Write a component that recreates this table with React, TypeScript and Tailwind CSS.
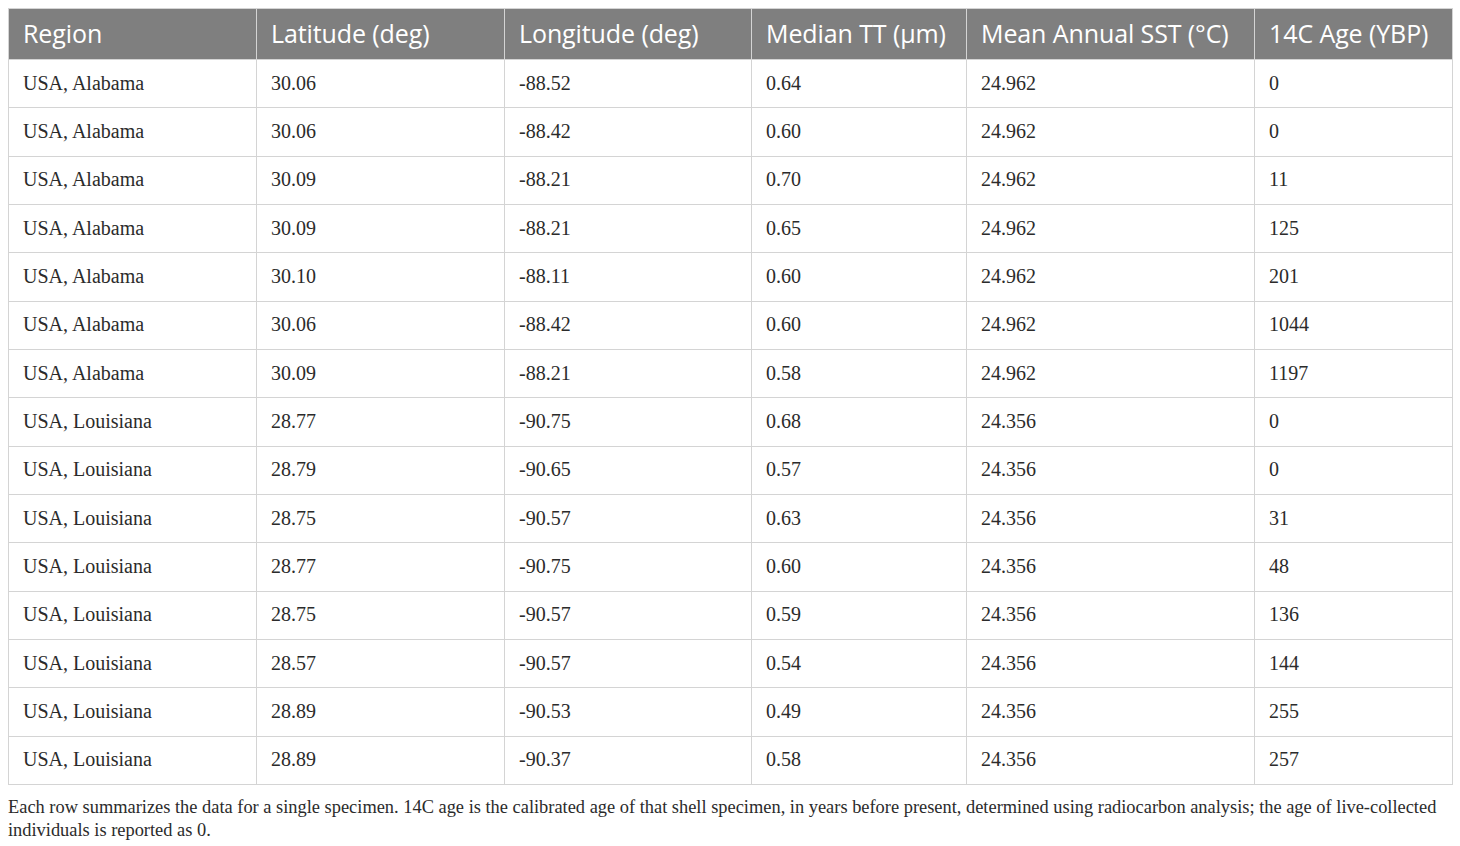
import React from "react";

const rows: string[][] = [
  ["USA, Alabama", "30.06", "-88.52", "0.64", "24.962", "0"],
  ["USA, Alabama", "30.06", "-88.42", "0.60", "24.962", "0"],
  ["USA, Alabama", "30.09", "-88.21", "0.70", "24.962", "11"],
  ["USA, Alabama", "30.09", "-88.21", "0.65", "24.962", "125"],
  ["USA, Alabama", "30.10", "-88.11", "0.60", "24.962", "201"],
  ["USA, Alabama", "30.06", "-88.42", "0.60", "24.962", "1044"],
  ["USA, Alabama", "30.09", "-88.21", "0.58", "24.962", "1197"],
  ["USA, Louisiana", "28.77", "-90.75", "0.68", "24.356", "0"],
  ["USA, Louisiana", "28.79", "-90.65", "0.57", "24.356", "0"],
  ["USA, Louisiana", "28.75", "-90.57", "0.63", "24.356", "31"],
  ["USA, Louisiana", "28.77", "-90.75", "0.60", "24.356", "48"],
  ["USA, Louisiana", "28.75", "-90.57", "0.59", "24.356", "136"],
  ["USA, Louisiana", "28.57", "-90.57", "0.54", "24.356", "144"],
  ["USA, Louisiana", "28.89", "-90.53", "0.49", "24.356", "255"],
  ["USA, Louisiana", "28.89", "-90.37", "0.58", "24.356", "257"],
];

const headers = [
  "Region",
  "Latitude (deg)",
  "Longitude (deg)",
  "Median TT (\u00b5m)",
  "Mean Annual SST (\u00b0C)",
  "14C Age (YBP)",
];

export default function App() {
  return (
    <div className="min-h-[846px] bg-white px-2 pt-2">
      <table className="w-[1444px] table-fixed border-collapse">
        <colgroup>
          <col className="w-[248px]" />
          <col className="w-[248px]" />
          <col className="w-[247px]" />
          <col className="w-[215px]" />
          <col className="w-[288px]" />
          <col className="w-[198px]" />
        </colgroup>
        <thead>
          <tr className="h-[51px] bg-[#7f7f7f]">
            {headers.map((h) => (
              <th
                key={h}
                className="border border-[#d4d4d4] pl-[14px] pr-0 text-left align-middle font-['Open_Sans',sans-serif] text-[25px] font-normal tracking-[-0.1px] whitespace-nowrap text-white"
              >
                {h}
              </th>
            ))}
          </tr>
        </thead>
        <tbody>
          {rows.map((r, i) => (
            <tr key={i} className="h-[48.33px]">
              {r.map((c, j) => (
                <td
                  key={j}
                  className="border border-[#d4d4d4] px-[14px] pb-[2px] align-middle font-['Liberation_Serif',serif] text-[20px] text-[#2b2b2b]"
                >
                  {c}
                </td>
              ))}
            </tr>
          ))}
        </tbody>
      </table>
      <p className="mt-[11px] w-[1444px] font-['Liberation_Serif',serif] text-[18.4px] leading-[23px] text-[#2b2b2b]">
        Each row summarizes the data for a single specimen. 14C age is the
        calibrated age of that shell specimen, in years before present,
        determined using radiocarbon analysis; the age of{" "}
        <span className="whitespace-nowrap">live-collected</span> individuals
        is reported as 0.
      </p>
    </div>
  );
}
